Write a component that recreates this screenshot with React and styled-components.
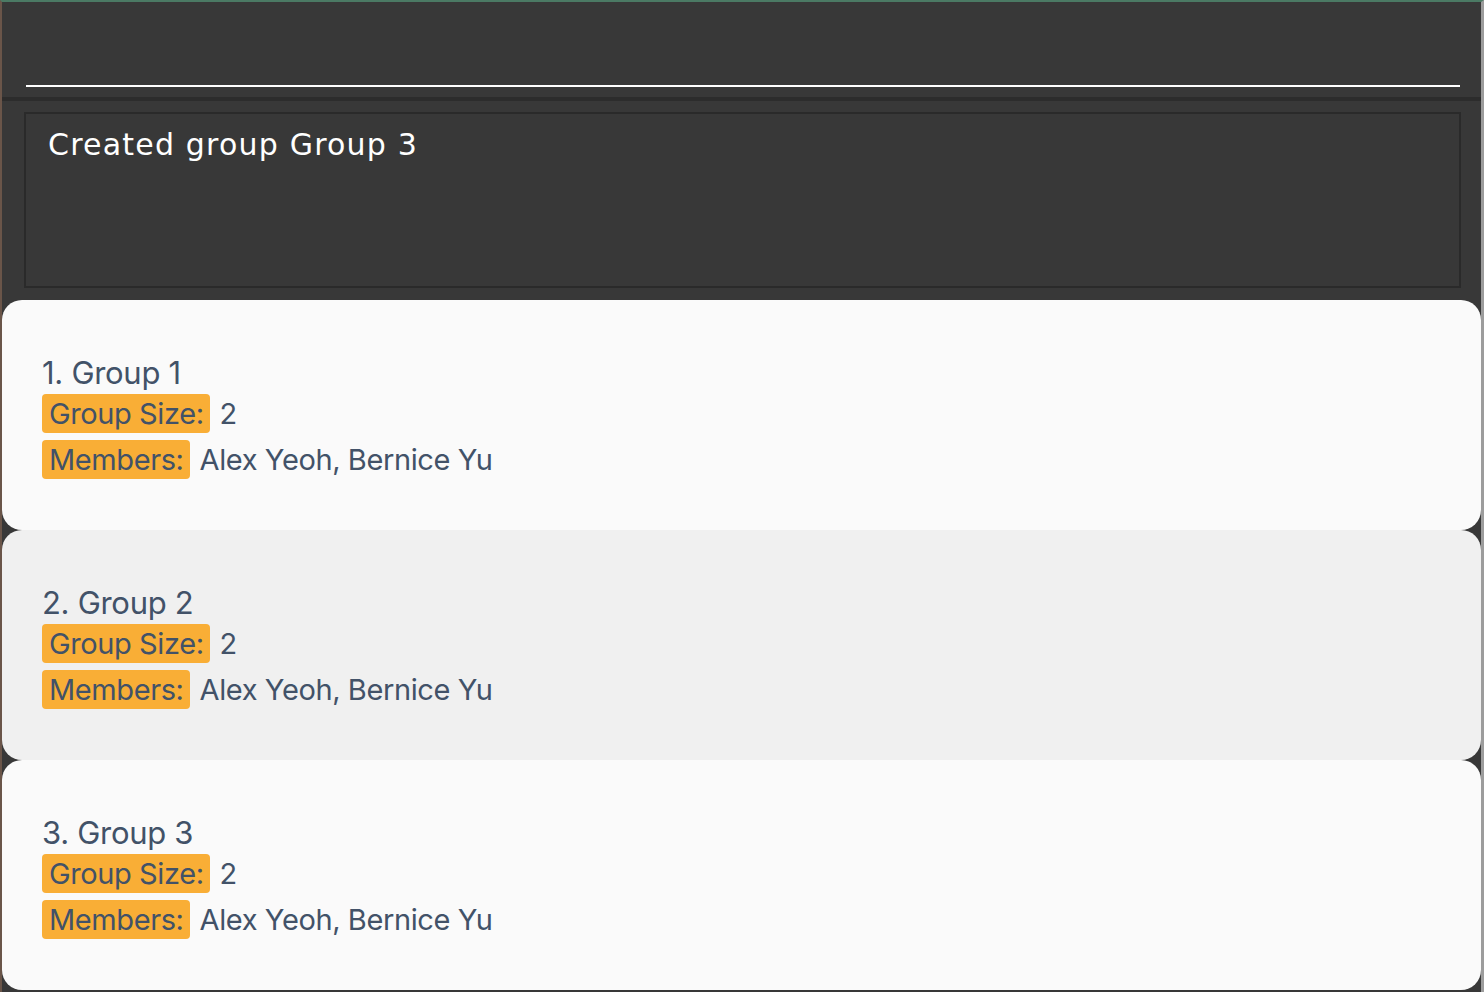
import React from "react";
import styled, {createGlobalStyle} from "styled-components";

const GlobalStyle = createGlobalStyle`
  html, body {
    margin: 0;
    padding: 0;
    background: #383838;
  }
`;

const Window = styled.div`
  width: 1484px;
  height: 992px;
  box-sizing: border-box;
  background: #383838;
  border-top: 2px solid #4b7a64;
  border-left: 2px solid #6a5549;
  border-right: 3px solid #9c9c9c;
  display: flex;
  flex-direction: column;
  overflow: hidden;
`;

const CommandBox = styled.div`
  height: 95px;
  flex-shrink: 0;
  display: flex;
  align-items: flex-end;
  padding: 0 0 10px 24px;
  box-sizing: border-box;
`;

const CommandInput = styled.div`
  width: 1434px;
  height: 30px;
  border-bottom: 2px solid #ffffff;
`;

const Divider = styled.div`
  height: 4px;
  flex-shrink: 0;
  background: #2c2c2c;
`;

const ResultPane = styled.div`
  height: 199px;
  flex-shrink: 0;
  padding: 11px 20px 12px 22px;
  box-sizing: border-box;
`;

const ResultBox = styled.div`
  height: 100%;
  border: 2px solid #2a2a2a;
  box-sizing: border-box;
  padding: 9px 22px;
  color: #ffffff;
  font-family: "DejaVu Sans", sans-serif;
  font-size: 30px;
  letter-spacing: 1.2px;
  line-height: 44px;
`;

const CardList = styled.div`
  flex: 1;
  display: flex;
  flex-direction: column;
`;

const Card = styled.div`
  height: 230px;
  flex-shrink: 0;
  box-sizing: border-box;
  border-radius: 20px;
  background: ${p => (p.$alt ? "#f0f0f0" : "#fafafa")};
  padding: 53px 40px 0 40px;
  display: flex;
  flex-direction: column;
  font-family: "Inter", "Noto Sans", sans-serif;
  color: #425268;
  font-size: 29px;
`;

const Title = styled.div`
  height: 39px;
  line-height: 39px;
  margin-bottom: 2px;
  font-size: 31px;
  letter-spacing: -0.3px;
`;

const Row = styled.div`
  display: flex;
  align-items: center;
  gap: 10px;
  height: 39px;
  margin-bottom: 7px;
  letter-spacing: -0.4px;
`;

const Label = styled.span`
  background: #f9ae36;
  border-radius: 4px;
  padding: 0 6px 0 7px;
  height: 39px;
  line-height: 39px;
`;

const groups = [
    {name: "Group 1", size: 2, members: "Alex Yeoh, Bernice Yu"},
    {name: "Group 2", size: 2, members: "Alex Yeoh, Bernice Yu"},
    {name: "Group 3", size: 2, members: "Alex Yeoh, Bernice Yu"},
];

const App = () => {
    return (
        <>
            <GlobalStyle/>
            <Window>
                <CommandBox>
                    <CommandInput/>
                </CommandBox>
                <Divider/>
                <ResultPane>
                    <ResultBox>Created group Group 3</ResultBox>
                </ResultPane>
                <CardList>
                    {groups.map((g, i) => (
                        <Card key={g.name} $alt={i % 2 === 1}>
                            <Title>{i + 1}. {g.name}</Title>
                            <Row>
                                <Label>Group Size:</Label>
                                <span>{g.size}</span>
                            </Row>
                            <Row>
                                <Label>Members:</Label>
                                <span>{g.members}</span>
                            </Row>
                        </Card>
                    ))}
                </CardList>
            </Window>
        </>
    );
};

export default App;
